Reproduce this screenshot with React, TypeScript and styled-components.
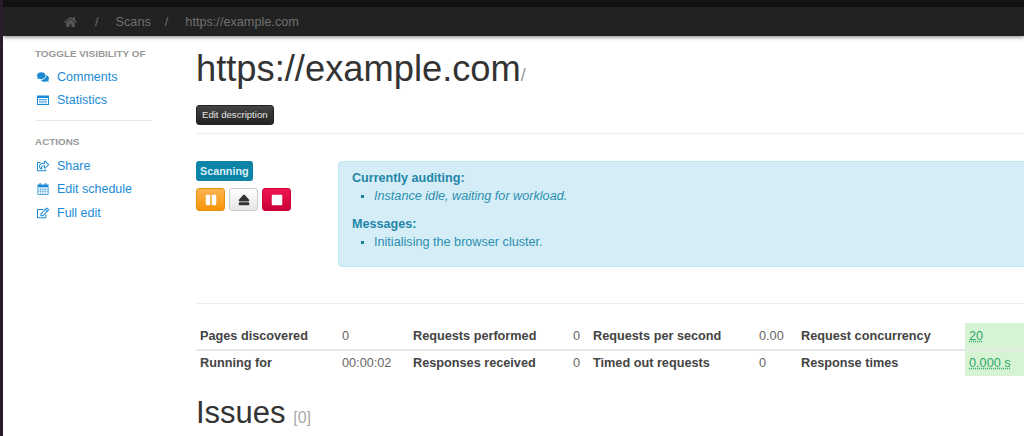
import React from 'react'
import styled, { createGlobalStyle } from 'styled-components'
import { FaHome, FaComments, FaRegShareSquare, FaRegEdit, FaPause, FaEject, FaStop } from 'react-icons/fa'

const GlobalStyle = createGlobalStyle`
	html, body {
		margin: 0;
		padding: 0;
		height: 100%;
		overflow: hidden;
		background: #fff;
	}

	body {
		font-family: 'Liberation Sans', Arial, sans-serif;
		font-size: 14px;
		line-height: 20px;
		color: #333;
	}

	* {
		box-sizing: border-box;
	}
`

const Window = styled.div`
	width: 1024px;
	height: 436px;
	overflow: hidden;
	display: flex;
	flex-direction: column;
	border-left: 3px solid #2c1a2b;
	background: #fff;
`

const TopEdge = styled.div`
	height: 7px;
	flex: none;
	margin-left: -3px;
	background: #131313;
`

const Navbar = styled.nav`
	height: 29px;
	flex: none;
	display: flex;
	align-items: center;
	padding-left: 61px;
	background: #222;
	box-shadow: 0 1px 4px rgba(0, 0, 0, 0.5);
	font-size: 12.7px;
	position: relative;
	z-index: 1;

	svg {
		width: 13px;
		height: 12px;
		margin-right: 4px;
		color: #555;
	}
`

const Crumb = styled.span`
	color: #707070;
`

const Divider = styled.span`
	padding: 0 17px 0 14px;
	color: #707070;
`

const Body = styled.div`
	display: flex;
	flex: 1;
	min-height: 0;
`

const Sidebar = styled.aside`
	width: 193px;
	flex: none;
	padding: 10px 0 0 32px;
`

const NavHeader = styled.div`
	font-size: 9.9px;
	font-weight: 700;
	line-height: 16px;
	color: #999;
	text-transform: uppercase;
`

const NavLink = styled.a`
	display: flex;
	align-items: center;
	gap: 8px;
	height: 23.5px;
	padding-left: 2px;
	font-size: 12.5px;
	color: #1a8ad4;
	text-decoration: none;

	svg {
		width: 12px;
		height: 12px;
		flex: none;
	}
`

const NavGroup = styled.div`
	margin-top: ${(p) => p.$top}px;
`

const NavDivider = styled.div`
	width: 116px;
	height: 1px;
	margin: 8px 0 13px 1px;
	background: #e5e5e5;
`

const Main = styled.main`
	width: 900px;
	flex: none;
`

const Title = styled.h1`
	margin: 13px 0 0;
	font-size: 36.3px;
	font-weight: 400;
	line-height: 40px;
	color: #333;

	small {
		font-size: 18px;
		line-height: 0;
		color: #999;
	}
`

const DescriptionButton = styled.button`
	display: block;
	height: 20px;
	margin-top: 16px;
	padding: 0 5px;
	border: 1px solid #222;
	border-radius: 3px;
	background: linear-gradient(#444, #222);
	color: #e4e4e4;
	font-family: inherit;
	font-size: 9.6px;
	line-height: 18px;
`

const Rule = styled.hr`
	height: 0;
	margin: ${(p) => p.$top}px 0 0;
	border: 0;
	border-top: 1px solid #eee;
`

const StatusRow = styled.section`
	display: flex;
	margin-top: 27px;
`

const StatusColumn = styled.div`
	width: 142px;
	flex: none;
`

const Badge = styled.span`
	display: block;
	width: fit-content;
	height: 20px;
	padding: 0 4px;
	border-radius: 3px;
	background: #0b84a8;
	color: #d8eef5;
	font-size: 10.8px;
	font-weight: 700;
	line-height: 20px;
`

const Controls = styled.div`
	display: flex;
	gap: 4px;
	margin-top: 7px;
`

const ControlButton = styled.button`
	width: 29px;
	height: 23px;
	display: flex;
	align-items: center;
	justify-content: center;
	padding: 0;
	border: 1px solid ${(p) => p.$border};
	border-radius: 3px;
	background: ${(p) => p.$background};
	color: ${(p) => p.$color};

	svg {
		width: 12px;
		height: 12px;
	}
`

const InfoBox = styled.div`
	width: 720px;
	height: 106px;
	flex: none;
	padding: 7px 13px;
	border: 1px solid #bce8f1;
	border-radius: 4px;
	background: #d5edf7;
	color: #2b8fb0;
	font-size: 12.65px;
	line-height: 18px;

	strong {
		display: block;
		font-size: 12.6px;
		color: #1f86a8;
	}

	ul {
		margin: 0 0 10px;
		padding-left: 22px;
		list-style: square;
	}

	li::marker {
		color: #1f7f9f;
		font-size: 10px;
	}
`

const Stats = styled.table`
	width: 828px;
	margin-top: 19px;
	border-collapse: collapse;
	table-layout: fixed;
	font-size: 12.7px;

	td {
		height: 26.5px;
		padding: 0 4px;
		vertical-align: middle;
	}

	tr + tr td {
		border-top: 2px solid #e8e8e8;
	}
`

const Label = styled.td`
	font-weight: 700;
	color: #444;
`

const Value = styled.td`
	color: #666;
`

const Good = styled.td`
	background: #d6f3d4;
	color: #2fa866;

	abbr {
		text-decoration: underline dotted;
	}
`

const Heading = styled.h2`
	margin: 17px 0 0;
	font-size: 31px;
	font-weight: 400;
	line-height: 40px;
	color: #333;

	small {
		font-size: 16px;
		line-height: 0;
		color: #aaa;
		margin-left: -1px;
	}
`

const ListAltIcon = () => (
	<svg viewBox='0 0 12 12' fill='currentColor'>
		<path d='M0 1.5h12v9.5H0zM1 4v6h10V4z' fillRule='evenodd' />
		<path d='M2 5h8v1H2zM2 6.8h8v1H2zM2 8.4h8v.9H2z' opacity='0.75' />
	</svg>
)

const CalendarIcon = () => (
	<svg viewBox='0 0 12 12' fill='currentColor'>
		<path d='M2.5 0h1.2v2.4H2.5zM8.3 0h1.2v2.4H8.3z' />
		<path d='M.5 1.4h11v10.4H.5zM1.3 4.2v6.8h9.4V4.2z' fillRule='evenodd' />
		<path
			d='M3.5 4.2h.6V11h-.6zM5.7 4.2h.6V11h-.6zM7.9 4.2h.6V11h-.6zM1.3 6.2h9.4v.6H1.3zM1.3 8.4h9.4V9H1.3z'
			opacity='0.8'
		/>
	</svg>
)

const columns = [142, 71, 160, 20, 166, 42, 168, 59]

const rows = [
	['Pages discovered', '0', 'Requests performed', '0', 'Requests per second', '0.00', 'Request concurrency', '20'],
	['Running for', '00:00:02', 'Responses received', '0', 'Timed out requests', '0', 'Response times', '0.000 s'],
]

export default function App() {
	return (
		<Window>
			<GlobalStyle />
			<TopEdge />
			<Navbar>
				<FaHome />
				<Divider>/</Divider>
				<Crumb>Scans</Crumb>
				<Divider>/</Divider>
				<Crumb>https://example.com</Crumb>
			</Navbar>
			<Body>
				<Sidebar>
					<NavHeader>Toggle visibility of</NavHeader>
					<NavGroup $top={3}>
						<NavLink href='#'>
							<FaComments />
							Comments
						</NavLink>
						<NavLink href='#'>
							<ListAltIcon />
							Statistics
						</NavLink>
					</NavGroup>
					<NavDivider />
					<NavHeader>Actions</NavHeader>
					<NavGroup $top={4}>
						<NavLink href='#'>
							<FaRegShareSquare />
							Share
						</NavLink>
						<NavLink href='#'>
							<CalendarIcon />
							Edit schedule
						</NavLink>
						<NavLink href='#'>
							<FaRegEdit />
							Full edit
						</NavLink>
					</NavGroup>
				</Sidebar>
				<Main>
					<Title>
						https://example.com<small>/</small>
					</Title>
					<DescriptionButton>Edit description</DescriptionButton>
					<Rule $top={8} />
					<StatusRow>
						<StatusColumn>
							<Badge>Scanning</Badge>
							<Controls>
								<ControlButton $background='linear-gradient(#fbb450, #f89406)' $border='#e8900f' $color='#fff'>
									<FaPause />
								</ControlButton>
								<ControlButton $background='linear-gradient(#fff, #e6e6e6)' $border='#ccc' $color='#333'>
									<FaEject />
								</ControlButton>
								<ControlButton $background='linear-gradient(#ee1650, #c90035)' $border='#c90035' $color='#fff'>
									<FaStop />
								</ControlButton>
							</Controls>
						</StatusColumn>
						<InfoBox>
							<strong>Currently auditing:</strong>
							<ul>
								<li>
									<em>Instance idle, waiting for workload.</em>
								</li>
							</ul>
							<strong>Messages:</strong>
							<ul>
								<li>Initialising the browser cluster.</li>
							</ul>
						</InfoBox>
					</StatusRow>
					<Rule $top={36} />
					<Stats>
						<colgroup>
							{columns.map((width, i) => (
								<col key={i} width={width} />
							))}
						</colgroup>
						<tbody>
							{rows.map((row) => (
								<tr key={row[0]}>
									<Label>{row[0]}</Label>
									<Value>{row[1]}</Value>
									<Label>{row[2]}</Label>
									<Value>{row[3]}</Value>
									<Label>{row[4]}</Label>
									<Value>{row[5]}</Value>
									<Label>{row[6]}</Label>
									<Good>
										<abbr>{row[7]}</abbr>
									</Good>
								</tr>
							))}
						</tbody>
					</Stats>
					<Heading>
						Issues <small>[0]</small>
					</Heading>
				</Main>
			</Body>
		</Window>
	)
}
